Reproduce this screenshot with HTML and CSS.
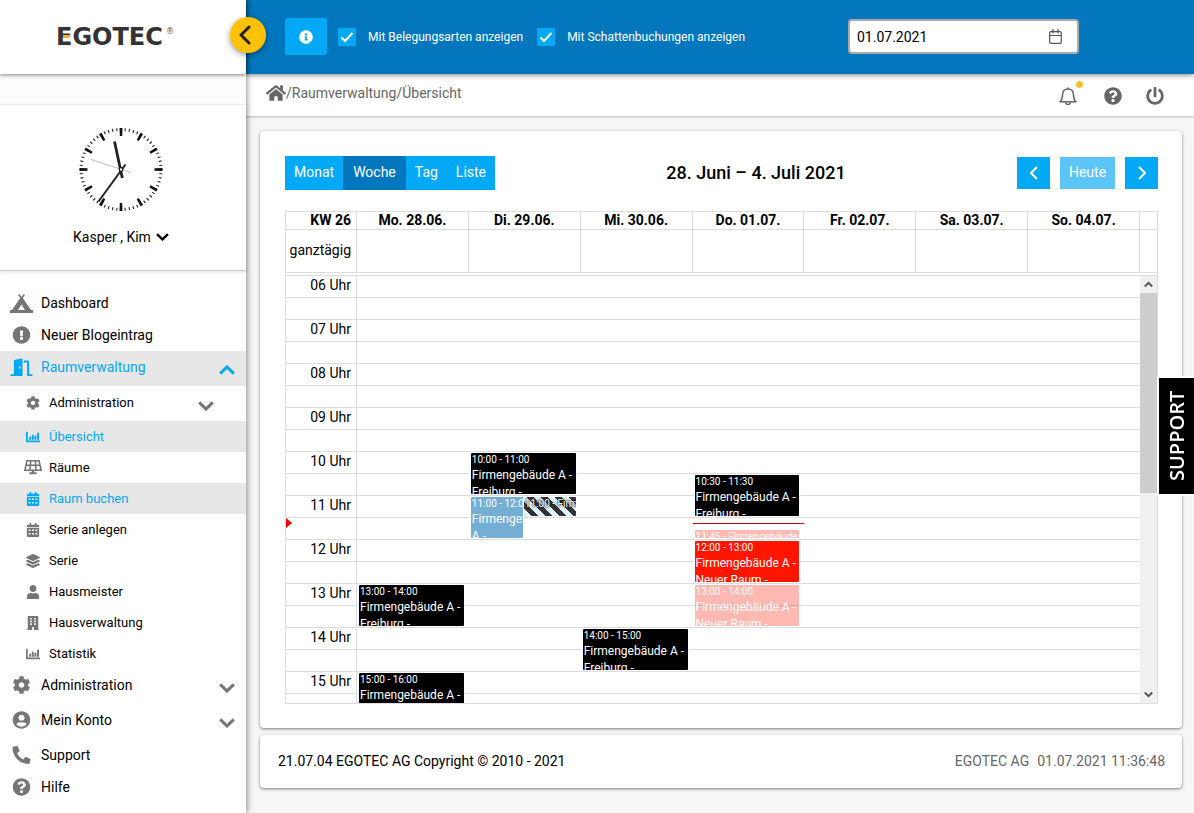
FILE: index.html
```html
<!DOCTYPE html>
<html lang="de">
<head>
<meta charset="utf-8">
<meta name="viewport" content="width=device-width, initial-scale=1">
<title>Raumverwaltung – Übersicht</title>
<link rel="stylesheet" href="styles.css">
</head>
<body>
<svg class="sprite" aria-hidden="true">
  <symbol id="i-home" viewBox="0 0 576 512"><path d="M280.37 148.26L96 300.11V464a16 16 0 0 0 16 16l112.06-.29a16 16 0 0 0 15.92-16V368a16 16 0 0 1 16-16h64a16 16 0 0 1 16 16v95.64a16 16 0 0 0 16 16.05L464 480a16 16 0 0 0 16-16V300L295.67 148.26a12.19 12.19 0 0 0-15.3 0zM571.6 251.47L488 182.56V44.05a12 12 0 0 0-12-12h-56a12 12 0 0 0-12 12v72.61L318.47 43a48 48 0 0 0-61 0L4.34 251.47a12 12 0 0 0-1.6 16.9l25.5 31A12 12 0 0 0 45.15 301l235.22-193.74a12.19 12.19 0 0 1 15.3 0L530.9 301a12 12 0 0 0 16.9-1.6l25.5-31a12 12 0 0 0-1.7-16.93z"/></symbol>
  <symbol id="i-cog" viewBox="0 0 512 512"><path d="M487.4 315.7l-42.6-24.6c4.3-23.2 4.3-47 0-70.2l42.6-24.6c4.9-2.8 7.1-8.6 5.5-14-11.1-35.6-30-67.8-54.7-94.6-3.8-4.1-10-5.1-14.8-2.3L380.8 110c-17.9-15.4-38.5-27.3-60.8-35.1V25.8c0-5.6-3.9-10.5-9.4-11.7-36.7-8.2-74.3-7.8-109.2 0-5.5 1.2-9.4 6.1-9.4 11.7V75c-22.2 7.9-42.8 19.8-60.8 35.1L88.7 85.5c-4.9-2.8-11-1.9-14.8 2.3-24.7 26.7-43.6 58.9-54.7 94.6-1.7 5.4.6 11.2 5.5 14L67.3 221c-4.3 23.2-4.3 47 0 70.2l-42.6 24.6c-4.9 2.8-7.1 8.6-5.5 14 11.1 35.6 30 67.8 54.7 94.6 3.8 4.1 10 5.1 14.8 2.3l42.6-24.6c17.9 15.4 38.5 27.3 60.8 35.1v49.2c0 5.6 3.9 10.5 9.4 11.7 36.7 8.2 74.3 7.8 109.2 0 5.5-1.2 9.4-6.1 9.4-11.7v-49.2c22.2-7.9 42.8-19.8 60.8-35.1l42.6 24.6c4.9 2.8 11 1.9 14.8-2.3 24.7-26.7 43.6-58.9 54.7-94.6 1.5-5.5-.7-11.3-5.6-14.1zM256 336c-44.1 0-80-35.9-80-80s35.9-80 80-80 80 35.9 80 80-35.9 80-80 80z"/></symbol>
  <symbol id="i-question" viewBox="0 0 512 512"><path d="M504 256c0 136.997-111.043 248-248 248S8 392.997 8 256C8 119.083 119.043 8 256 8s248 111.083 248 248zM262.655 90c-54.497 0-89.255 22.957-116.549 63.758-3.536 5.286-2.353 12.415 2.715 16.258l34.699 26.31c5.205 3.947 12.621 3.008 16.665-2.122 17.864-22.658 30.113-35.797 57.303-35.797 20.429 0 45.698 13.148 45.698 32.958 0 14.976-12.363 22.667-32.534 33.976C247.128 238.528 216 254.941 216 296v4c0 6.627 5.373 12 12 12h56c6.627 0 12-5.373 12-12v-1.333c0-28.462 83.186-29.647 83.186-106.667 0-58.002-60.165-102-116.531-102zM256 338c-25.365 0-46 20.635-46 46 0 25.364 20.635 46 46 46s46-20.636 46-46c0-25.365-20.635-46-46-46z"/></symbol>
  <symbol id="i-info" viewBox="0 0 512 512"><path d="M256 8C119.043 8 8 119.083 8 256c0 136.997 111.043 248 248 248s248-111.003 248-248C504 119.083 392.957 8 256 8zm0 110c23.196 0 42 18.804 42 42s-18.804 42-42 42-42-18.804-42-42 18.804-42 42-42zm56 254c0 6.627-5.373 12-12 12h-88c-6.627 0-12-5.373-12-12v-24c0-6.627 5.373-12 12-12h12v-64h-12c-6.627 0-12-5.373-12-12v-24c0-6.627 5.373-12 12-12h64c6.627 0 12 5.373 12 12v100h12c6.627 0 12 5.373 12 12v24z"/></symbol>
  <symbol id="i-exclaim" viewBox="0 0 512 512"><path d="M504 256c0 136.997-111.043 248-248 248S8 392.997 8 256C8 119.083 119.043 8 256 8s248 111.083 248 248zm-248 50c-25.405 0-46 20.595-46 46s20.595 46 46 46 46-20.595 46-46-20.595-46-46-46zm-43.673-165.346l7.418 136c.347 6.364 5.609 11.346 11.982 11.346h48.546c6.373 0 11.635-4.982 11.982-11.346l7.418-136c.375-6.874-5.098-12.654-11.982-12.654h-63.383c-6.884 0-12.356 5.78-11.981 12.654z"/></symbol>
  <symbol id="i-power" viewBox="0 0 512 512"><path d="M400 54.1c63 45 104 118.6 104 201.9 0 136.8-110.8 247.7-247.5 248C120 504.3 8.2 393 8 256.4 7.9 173.1 48.9 99.3 111.8 54.2c11.7-8.3 28-4.8 35 7.7L162.6 90c5.9 10.5 3.1 23.8-6.6 31-41.5 30.8-68 79.6-68 134.9-.1 92.3 74.5 168.1 168 168.1 91.6 0 168.6-74.2 168-169.1-.3-51.8-24.7-101.8-68.1-134-9.7-7.2-12.4-20.5-6.5-30.9l15.8-28.1c7-12.4 23.2-16.1 34.8-7.8zM296 264V24c0-13.3-10.7-24-24-24h-32c-13.3 0-24 10.7-24 24v240c0 13.3 10.7 24 24 24h32c13.3 0 24-10.7 24-24z"/></symbol>
  <symbol id="i-user" viewBox="0 0 448 512"><path d="M224 256c70.7 0 128-57.3 128-128S294.7 0 224 0 96 57.3 96 128s57.3 128 128 128zm89.6 32h-16.7c-22.2 10.2-46.9 16-72.9 16s-50.6-5.8-72.9-16h-16.7C60.2 288 0 348.2 0 422.4V464c0 26.5 21.5 48 48 48h352c26.5 0 48-21.5 48-48v-41.6c0-74.2-60.2-134.4-134.4-134.4z"/></symbol>
  <symbol id="i-account" viewBox="0 0 496 512"><path d="M248 8C111 8 0 119 0 256s111 248 248 248 248-111 248-248S385 8 248 8zm0 96c48.6 0 88 39.4 88 88s-39.4 88-88 88-88-39.4-88-88 39.4-88 88-88zm0 344c-58.7 0-111.3-26.6-146.5-68.2 18.8-35.4 55.6-59.8 98.5-59.8 2.4 0 4.8.4 7.1 1.1 13 4.2 26.6 6.9 40.9 6.9 14.3 0 28-2.7 40.9-6.9 2.3-.7 4.7-1.1 7.1-1.1 42.9 0 79.7 24.4 98.5 59.8C359.3 421.4 306.7 448 248 448z"/></symbol>
  <symbol id="i-phone" viewBox="0 0 512 512"><path transform="matrix(-1 0 0 1 512 0)" d="M493.4 24.6l-104-24c-11.3-2.6-22.9 3.3-27.5 13.9l-48 112c-4.2 9.8-1.4 21.3 6.9 28l60.6 49.6c-36 76.7-98.9 140.5-177.2 177.2l-49.6-60.6c-6.8-8.3-18.2-11.1-28-6.9l-112 48C3.9 366.5-2 378.1.6 389.4l24 104C27.1 504.2 36.7 512 48 512c256.1 0 464-207.5 464-464 0-11.2-7.7-20.9-18.6-23.4z"/></symbol>
  <symbol id="i-layers" viewBox="0 0 512 512"><path d="M12.41 148.02l232.94 105.67c6.8 3.09 14.49 3.09 21.29 0l232.94-105.67c16.55-7.51 16.55-32.52 0-40.03L266.65 2.31a25.607 25.607 0 0 0-21.29 0L12.41 107.98c-16.55 7.51-16.55 32.53 0 40.04zm487.18 88.28l-58.09-26.33-161.64 73.27c-7.56 3.43-15.59 5.17-23.86 5.17s-16.29-1.74-23.86-5.17L70.51 209.97l-58.1 26.33c-16.55 7.5-16.55 32.5 0 40l232.94 105.59c6.8 3.08 14.49 3.08 21.29 0L499.59 276.3c16.55-7.5 16.55-32.5 0-40zm0 127.8l-57.87-26.23-161.86 73.37c-7.56 3.43-15.59 5.17-23.86 5.17s-16.29-1.74-23.86-5.17L70.29 337.87 12.41 364.1c-16.55 7.5-16.55 32.5 0 40l232.94 105.59c6.8 3.08 14.49 3.08 21.29 0L499.59 404.1c16.55-7.5 16.55-32.5 0-40z"/></symbol>
  <symbol id="i-calendar" viewBox="0 0 448 512"><path fill-rule="evenodd" d="M0 144V112a48 48 0 0 1 48-48h48V12a12 12 0 0 1 12-12h40a12 12 0 0 1 12 12v52h128V12a12 12 0 0 1 12-12h40a12 12 0 0 1 12 12v52h48a48 48 0 0 1 48 48v32zM0 176h448v288a48 48 0 0 1-48 48H48a48 48 0 0 1-48-48zM64 236v60h72v-60zM188 236v60h72v-60zM312 236v60h72v-60zM64 364v60h72v-60zM188 364v60h72v-60zM312 364v60h72v-60z"/></symbol>
  <symbol id="i-chart" viewBox="0 0 512 512"><path d="M0 76a12 12 0 0 1 12-12h40a12 12 0 0 1 12 12v308h436a12 12 0 0 1 12 12v40a12 12 0 0 1-12 12H32a32 32 0 0 1-32-32zM116 244h72v108h-72zM212 172h72v180h-72zM308 212h72v140h-72zM404 100h72v252h-72z"/></symbol>
  <symbol id="i-building" viewBox="0 0 448 512"><path fill-rule="evenodd" d="M8 480h24V24A24 24 0 0 1 56 0h336a24 24 0 0 1 24 24v456h24v32H256V400h-64v112H8zM120 70v60h60v-60zM268 70v60h60v-60zM120 168v60h60v-60zM268 168v60h60v-60zM120 266v60h60v-60zM268 266v60h60v-60z"/></symbol>
  <symbol id="i-panel" viewBox="0 0 18 15"><path fill="none" stroke="currentColor" stroke-width="1.600" d="M3 .8h12l2.100 9.400H.9zM2 5.300h14M6.700.8l-.8 9.400M11.300.8l.8 9.400"/><path d="M7.800 10h2.400v2.300h2.300v2H5.500v-2h2.300z"/></symbol>
  <symbol id="i-door" viewBox="0 0 23 20"><path fill-rule="evenodd" d="M0 17h3.500V3.500Q3.500 2.200 4.800 1.900L11 .5q1.600-.3 1.600 1.200V19H0zM9.600 8.600q-1 0-1 1.400t1 1.400 1-1.400-1-1.400z"/><path d="M14 2.500h4q1.600 0 1.600 1.600V17H23v2h-5.600V4.700H14z"/></symbol>
  <symbol id="i-camp" viewBox="0 0 23 19"><path fill-rule="evenodd" d="M8 .9 9.300 0l2.200 3 2.200-3L15 .9l-2.200 3.100L21 16h2v3H0v-3h2l8.200-12zM11.500 10.500 8 16h7z"/></symbol>
  <symbol id="i-bell" viewBox="0 0 18 19"><path fill="none" stroke="currentColor" stroke-width="1.500" stroke-linejoin="round" d="M1 14.700Q3.500 12.500 3.500 8 3.500 2 9 2t5.500 6q0 4.500 2.500 6.700z"/><path fill="none" stroke="currentColor" stroke-width="1.500" d="M9 2V.5M6.500 15.300Q7 17.500 9 17.500t2.500-2.200"/></symbol>
  <symbol id="i-down" viewBox="0 0 16 10"><path fill="none" stroke="currentColor" stroke-width="3" d="M1.200 1.400 8 8l6.800-6.600"/></symbol>
  <symbol id="i-up" viewBox="0 0 16 10"><path fill="none" stroke="currentColor" stroke-width="3" d="M1.200 8.600 8 2l6.800 6.600"/></symbol>
  <symbol id="i-left" viewBox="0 0 10 16"><path fill="none" stroke="currentColor" stroke-width="2" d="M8 2 2 8l6 6"/></symbol>
  <symbol id="i-right" viewBox="0 0 10 16"><path fill="none" stroke="currentColor" stroke-width="2" d="M2 2l6 6-6 6"/></symbol>
</svg>

<div class="app">
  <aside class="sidebar">
    <div class="brand">
      <svg class="logo" viewBox="0 0 132 28" role="img" aria-label="EGOTEC">
        <text class="logo-text" x="6" y="22">EGOTEC</text>
        <rect x="13" y="12" width="7" height="3" fill="#f0b040"/>
        <text class="logo-mark" x="116" y="11">®</text>
      </svg>
      <button class="collapse" type="button" aria-label="Menü einklappen">
        <svg width="12" height="20" viewBox="0 0 12 20"><path fill="none" stroke="#222" stroke-width="3" stroke-linecap="round" d="M10 2 2 10l8 8"/></svg>
      </button>
    </div>
    <div class="strip"></div>
    <div class="profile">
      <svg class="clock" viewBox="-42 -42 84 84" role="img" aria-label="11:36">
        <circle r="40" pathLength="600" fill="none" stroke="#222" stroke-width="3" stroke-dasharray="2.600 7.400" stroke-dashoffset="1.300"/>
        <circle r="37.500" pathLength="120" fill="none" stroke="#111" stroke-width="8" stroke-dasharray="1.400 8.600" stroke-dashoffset=".7"/>
        <path stroke="#222" stroke-width="2.800" d="M-6.500-28 1.300 8.500"/>
        <path stroke="#222" stroke-width="2" d="M4.500-5-22.500 32"/>
        <path stroke="#aaa" stroke-width=".8" d="M-30-10 10 3"/>
        <circle r="1.800" fill="#fff" stroke="#111" stroke-width="1.200"/>
      </svg>
      <button class="user" type="button">Kasper , Kim <svg class="user-arrow"><use href="#i-down"/></svg></button>
    </div>
    <nav class="nav">
      <a class="item" href="#"><svg class="icon wide"><use href="#i-camp"/></svg><span>Dashboard</span></a>
      <a class="item" href="#"><svg class="icon"><use href="#i-exclaim"/></svg><span>Neuer Blogeintrag</span></a>
      <a class="item parent active" href="#"><svg class="icon wide"><use href="#i-door"/></svg><span>Raumverwaltung</span><svg class="arrow"><use href="#i-up"/></svg></a>
      <a class="item sub parent" href="#"><svg class="icon"><use href="#i-cog"/></svg><span>Administration</span><svg class="arrow"><use href="#i-down"/></svg></a>
      <a class="item sub active" href="#"><svg class="icon"><use href="#i-chart"/></svg><span>Übersicht</span></a>
      <a class="item sub" href="#"><svg class="icon wide"><use href="#i-panel"/></svg><span>Räume</span></a>
      <a class="item sub active" href="#"><svg class="icon"><use href="#i-calendar"/></svg><span>Raum buchen</span></a>
      <a class="item sub" href="#"><svg class="icon"><use href="#i-calendar"/></svg><span>Serie anlegen</span></a>
      <a class="item sub" href="#"><svg class="icon"><use href="#i-layers"/></svg><span>Serie</span></a>
      <a class="item sub" href="#"><svg class="icon"><use href="#i-user"/></svg><span>Hausmeister</span></a>
      <a class="item sub" href="#"><svg class="icon"><use href="#i-building"/></svg><span>Hausverwaltung</span></a>
      <a class="item sub" href="#"><svg class="icon"><use href="#i-chart"/></svg><span>Statistik</span></a>
      <a class="item parent" href="#"><svg class="icon"><use href="#i-cog"/></svg><span>Administration</span><svg class="arrow"><use href="#i-down"/></svg></a>
      <a class="item parent" href="#"><svg class="icon"><use href="#i-account"/></svg><span>Mein Konto</span><svg class="arrow"><use href="#i-down"/></svg></a>
      <a class="item" href="#"><svg class="icon"><use href="#i-phone"/></svg><span>Support</span></a>
      <a class="item" href="#"><svg class="icon"><use href="#i-question"/></svg><span>Hilfe</span></a>
    </nav>
  </aside>

  <div class="main">
    <header class="topbar">
      <button class="info" type="button" aria-label="Information"><svg width="14" height="14"><use href="#i-info"/></svg></button>
      <label class="check"><input type="checkbox" checked><span>Mit Belegungsarten anzeigen</span></label>
      <label class="check"><input type="checkbox" checked><span>Mit Schattenbuchungen anzeigen</span></label>
      <div class="date">
        <input type="text" value="01.07.2021" aria-label="Datum">
        <svg width="13" height="15" viewBox="0 0 13 15"><path fill="none" stroke="#555" stroke-width="1.200" d="M2 2.600h9q1.300 0 1.300 1.300V13q0 1.300-1.300 1.300H2Q.7 14.300.7 13V3.900Q.7 2.600 2 2.600zM.7 6.500h11.600M4 0v4.500M9 0v4.500"/></svg>
      </div>
    </header>
    <div class="crumbs">
      <div class="path"><a href="#" aria-label="Start"><svg width="20" height="18"><use href="#i-home"/></svg></a>/<a href="#">Raumverwaltung</a>/<a href="#">Übersicht</a></div>
      <div class="tools">
        <button class="tool bell" type="button" aria-label="Benachrichtigungen"><svg width="18" height="19"><use href="#i-bell"/></svg><span class="dot"></span></button>
        <button class="tool" type="button" aria-label="Hilfe"><svg width="18" height="18"><use href="#i-question"/></svg></button>
        <button class="tool" type="button" aria-label="Abmelden"><svg width="18" height="18"><use href="#i-power"/></svg></button>
      </div>
    </div>

    <main class="content">
      <section class="card planner">
        <div class="bar">
          <div class="views">
            <button type="button">Monat</button><button class="on" type="button">Woche</button><button type="button">Tag</button><button type="button">Liste</button>
          </div>
          <h1>28. Juni – 4. Juli 2021</h1>
          <div class="pager">
            <button type="button" aria-label="Zurück"><svg width="10" height="16"><use href="#i-left"/></svg></button>
            <button class="today" type="button" disabled>Heute</button>
            <button type="button" aria-label="Weiter"><svg width="10" height="16"><use href="#i-right"/></svg></button>
          </div>
        </div>

        <div class="calendar">
          <table class="head">
            <colgroup><col class="c-axis"><col span="7"><col class="c-scroll"></colgroup>
            <thead><tr><th>KW 26</th><th>Mo. 28.06.</th><th>Di. 29.06.</th><th>Mi. 30.06.</th><th>Do. 01.07.</th><th>Fr. 02.07.</th><th>Sa. 03.07.</th><th>So. 04.07.</th><td></td></tr></thead>
            <tbody><tr class="allday"><th>ganztägig</th><td></td><td></td><td></td><td></td><td></td><td></td><td></td><td></td></tr></tbody>
          </table>
          <div class="divider"></div>
          <div class="scroller">
            <div class="viewport">
              <table class="slots">
                <colgroup><col class="c-axis"><col></colgroup>
                <tbody>
                  <tr><th>06 Uhr</th><td></td></tr><tr><th></th><td></td></tr>
                  <tr><th>07 Uhr</th><td></td></tr><tr><th></th><td></td></tr>
                  <tr><th>08 Uhr</th><td></td></tr><tr><th></th><td></td></tr>
                  <tr><th>09 Uhr</th><td></td></tr><tr><th></th><td></td></tr>
                  <tr><th>10 Uhr</th><td></td></tr><tr><th></th><td></td></tr>
                  <tr><th>11 Uhr</th><td></td></tr><tr><th></th><td></td></tr>
                  <tr><th>12 Uhr</th><td></td></tr><tr><th></th><td></td></tr>
                  <tr><th>13 Uhr</th><td></td></tr><tr><th></th><td></td></tr>
                  <tr><th>14 Uhr</th><td></td></tr><tr><th></th><td></td></tr>
                  <tr><th>15 Uhr</th><td></td></tr><tr><th></th><td></td></tr>
                </tbody>
              </table>
              <div class="days">
                <div class="axis"><span class="now-arrow" style="top:242px"></span></div>
                <div class="day">
                  <a class="event" href="#" style="top:309px;height:41px"><time>13:00 - 14:00</time><span>Firmengebäude A - Freiburg -</span></a>
                  <a class="event" href="#" style="top:397px;height:41px"><time>15:00 - 16:00</time><span>Firmengebäude A - Freiburg -</span></a>
                </div>
                <div class="day">
                  <a class="event" href="#" style="top:177px;height:41px"><time>10:00 - 11:00</time><span>Firmengebäude A - Freiburg -</span></a>
                  <a class="event blue half-left" href="#" style="top:221px;height:41px"><time>11:00 - 12:00</time><span>Firmengebäude A -</span></a>
                  <a class="event striped half-right" href="#" style="top:221px;height:19px"><time>11:00 - Firmengebäude A</time></a>
                </div>
                <div class="day">
                  <a class="event" href="#" style="top:353px;height:41px"><time>14:00 - 15:00</time><span>Firmengebäude A - Freiburg -</span></a>
                </div>
                <div class="day">
                  <a class="event" href="#" style="top:199px;height:41px"><time>10:30 - 11:30</time><span>Firmengebäude A - Freiburg -</span></a>
                  <span class="now-line" style="top:247px"></span>
                  <a class="event pink" href="#" style="top:254px;height:8px"><time>11:45 - Firmengebäude A</time></a>
                  <a class="event red" href="#" style="top:265px;height:41px"><time>12:00 - 13:00</time><span>Firmengebäude A - Neuer Raum -</span></a>
                  <a class="event pink" href="#" style="top:309px;height:41px"><time>13:00 - 14:00</time><span>Firmengebäude A - Neuer Raum -</span></a>
                </div>
                <div class="day"></div>
                <div class="day"></div>
                <div class="day"></div>
              </div>
            </div>
            <div class="scrollbar" aria-hidden="true">
              <svg width="9" height="17" viewBox="0 0 9 17"><path fill="none" stroke="#555" stroke-width="2" d="M.8 10.500 4.500 6.800l3.700 3.700"/></svg>
              <span class="thumb"></span>
              <svg width="9" height="17" viewBox="0 0 9 17"><path fill="none" stroke="#555" stroke-width="2" d="M.8 6.500l3.700 3.700 3.700-3.700"/></svg>
            </div>
          </div>
        </div>
      </section>

      <footer class="card foot">
        <span>21.07.04 EGOTEC AG Copyright © 2010 - 2021</span>
        <span class="stamp"><span>EGOTEC AG</span><time>01.07.2021 11:36:48</time></span>
      </footer>
    </main>
  </div>
  <button class="support" type="button">SUPPORT</button>
</div>
</body>
</html>
```
FILE: styles.css
```css
* { box-sizing: border-box; }

body {
  margin: 0;
  background: #f6f6f6;
  color: #000;
  font: 14px/20px Roboto, "Liberation Sans", sans-serif;
}

button {
  margin: 0;
  padding: 0;
  border: 0;
  background: none;
  color: inherit;
  font: inherit;
  cursor: pointer;
}

a { color: inherit; text-decoration: none; }
svg { display: block; fill: currentColor; }

.sprite { position: absolute; width: 0; height: 0; }

.app { display: flex; min-height: 100vh; }

/* Sidebar */
.sidebar {
  position: relative;
  z-index: 2;
  flex: 0 0 246px;
  background: #fff;
  box-shadow: 1px 0 6px rgba(0, 0, 0, .45);
}

.brand {
  position: relative;
  z-index: 1;
  display: flex;
  align-items: center;
  justify-content: center;
  height: 74px;
  padding-right: 14px;
  background: #fff;
  box-shadow: 0 1px 4px rgba(0, 0, 0, .5);
}

.logo { width: 132px; height: 28px; overflow: visible; }
.logo-text { fill: #333; font: bold 24px "DejaVu Sans", sans-serif; }
.logo-mark { fill: #555; font: 8px "DejaVu Sans", sans-serif; }

.collapse {
  position: absolute;
  top: 17px;
  right: -20px;
  display: flex;
  align-items: center;
  justify-content: center;
  width: 36px;
  height: 36px;
  padding-right: 6px;
  border-radius: 50%;
  background: #ffc107;
  box-shadow: 0 2px 6px rgba(0, 0, 0, .4);
}

.strip { height: 31px; background: #fdfdfd; border-bottom: 1px solid #f4f4f4; }

.profile {
  display: flex;
  flex-direction: column;
  align-items: center;
  gap: 15px;
  padding: 22px 4px 23px 0;
  border-bottom: 1px solid #ccc;
  box-shadow: 0 1px 4px rgba(0, 0, 0, .12);
}

.clock { width: 84px; height: 85px; }
.user { display: flex; align-items: center; gap: 5px; }
.user-arrow { width: 13px; height: 8px; }

.nav { display: flex; flex-direction: column; padding: 16px 0 10px; }

.item {
  display: flex;
  align-items: center;
  gap: 10px;
  height: 32px;
  padding: 0 10px 0 12px;
}

.item .icon { flex: none; width: 19px; height: 18px; color: #757575; }
.item .icon.wide { width: 23px; height: 19px; margin: 0 -2px; }
.item .arrow { width: 16px; height: 10px; margin: 6px 1px 0 auto; color: #757575; }
.item.parent { height: 35px; padding-bottom: 3px; }

.item.sub { gap: 9px; height: 31px; padding: 0 31px 0 26px; font-size: 13px; }
.item.sub .icon { width: 14px; height: 14px; }
.item.sub .icon.wide { width: 18px; height: 15px; }
.item.sub.parent { height: 35px; padding-bottom: 2px; }

.item.active { background: #e7e7e7; }
.item.active, .item.active .icon, .item.active .arrow { color: #03a9f4; }

/* Header */
.main { flex: 1; min-width: 0; }

.topbar {
  position: relative;
  z-index: 1;
  display: flex;
  align-items: center;
  height: 74px;
  padding: 0 115px 1px 39px;
  background: #0277bd;
  color: #fff;
  box-shadow: 0 1px 5px rgba(0, 0, 0, .5);
}

.info {
  display: flex;
  align-items: center;
  justify-content: center;
  width: 42px;
  height: 37px;
  margin-right: 11px;
  border-radius: 3px;
  background: #03a9f4;
}

.check {
  display: flex;
  align-items: center;
  gap: 12px;
  margin-right: 14px;
  font-size: 12px;
}

.check input {
  width: 18px;
  height: 18px;
  margin: 0;
  border-radius: 1px;
  appearance: none;
  background: #03a9f4 url("data:image/svg+xml,%3Csvg xmlns='http://www.w3.org/2000/svg' viewBox='0 0 18 18'%3E%3Cpath fill='none' stroke='white' stroke-width='2' d='M3.500 9.500l3.500 3.500 7.500-8'/%3E%3C/svg%3E");
}

.date { position: relative; width: 231px; margin-left: auto; }

.date input {
  width: 100%;
  height: 35px;
  padding: 0 40px 0 7px;
  border: 2px solid #aaa;
  border-radius: 4px;
  background: #fff;
  color: #000;
  font: inherit;
}

.date svg { position: absolute; top: 10px; right: 17px; }

.crumbs {
  display: flex;
  align-items: center;
  justify-content: space-between;
  height: 42px;
  padding: 0 30px 4px 20px;
  background: #fff;
  color: #666;
  box-shadow: 0 1px 2px rgba(0, 0, 0, .25);
}

.path { display: flex; align-items: center; }
.tools { display: flex; align-items: center; gap: 24px; padding-top: 6px; }
.bell { position: relative; margin-right: 3px; }

.dot {
  position: absolute;
  top: -6px;
  right: -6px;
  width: 7px;
  height: 7px;
  border-radius: 50%;
  background: #fbc02d;
}

/* Content */
.content { display: flex; flex-direction: column; gap: 7px; padding: 15px 12px 24px 14px; }

.card {
  border-radius: 4px;
  background: #fff;
  box-shadow: 0 1px 3px rgba(0, 0, 0, .5);
}

.planner { padding: 25px 24px 24px 25px; }

.bar { display: flex; align-items: center; justify-content: space-between; margin-bottom: 21px; }
.bar h1 { margin: 0; font-size: 18px; font-weight: 500; }

.views { display: flex; background: #03a9f4; color: #fff; }
.views button { height: 34px; padding: 0 9px 2px; }
.views .on { padding: 0 10px 2px; background: #0277bd; }

.pager { display: flex; gap: 10px; color: #fff; }
.pager button {
  display: flex;
  align-items: center;
  justify-content: center;
  width: 33px;
  height: 32px;
  background: #03a9f4;
}
.pager .today { width: 55px; padding-bottom: 2px; background: #5bc5f8; color: #fff; }

/* Calendar */
.calendar { border: 1px solid #ddd; }

table { width: 100%; table-layout: fixed; border-spacing: 0; }
th, td { padding: 0; border: 0 solid #ddd; }
.c-axis { width: 71px; }
.c-scroll { width: 17px; }

.head th, .head td { height: 18px; border-width: 0 1px 1px 0; line-height: 17px; }
.head tr > :last-child { border-right: 0; }
.head th:first-child { padding-right: 5px; text-align: right; }
.head .allday > * { height: 43px; padding-bottom: 2px; font-weight: 400; }

.divider { height: 3px; border-bottom: 1px solid #ddd; }

.scroller { display: flex; height: 427px; }
.viewport { position: relative; flex: 1; min-width: 0; overflow: hidden; }

.slots th, .slots td { height: 22px; padding-bottom: 2px; border-bottom-width: 1px; line-height: 19px; }
.slots th { padding-right: 5px; border-right-width: 1px; font-weight: 400; text-align: right; }

.days {
  position: absolute;
  inset: 0;
  display: grid;
  grid-template-columns: 71px repeat(7, 1fr);
}

.axis, .day { position: relative; }

.event {
  position: absolute;
  left: 2px;
  right: 5px;
  overflow: hidden;
  padding: 0 1px;
  border-radius: 1px;
  background: #000;
  box-shadow: 0 0 0 1px #fff;
  color: #fff;
  font-size: 12px;
  line-height: 17px;
}

.event time { display: block; font-size: 10px; line-height: 14px; white-space: nowrap; }
.event span { display: block; }
.event.blue { background: #74aed5; }
.event.red { background: #ff1500; }
.event.pink { background: rgba(255, 21, 0, .3); }
.event.half-left { right: 58px; }
.event.half-right { left: 55px; }
.event.striped {
  background: repeating-linear-gradient(45deg, #e1f3ff 0 5px, #333 5px 10px);
  text-shadow: 0 0 2px #000, 0 0 2px #000;
}

.now-line { position: absolute; left: 0; right: 0; height: 1px; background: #d00000; }

.now-arrow {
  position: absolute;
  left: 0;
  border: 5px solid transparent;
  border-left: 6px solid #f00;
  border-right: 0;
}

.scrollbar {
  display: flex;
  flex: 0 0 17px;
  flex-direction: column;
  align-items: center;
  background: #f0f0f0;
}

.thumb { width: 17px; height: 200px; margin-bottom: auto; background: #cdcdcd; }

/* Footer */
.foot {
  display: flex;
  align-items: center;
  justify-content: space-between;
  min-height: 53px;
  padding: 0 17px 2px 18px;
}

.stamp { display: flex; gap: 8px; color: #666; }

/* Support tab */
.support {
  position: fixed;
  z-index: 3;
  top: 376px;
  right: 0;
  width: 37px;
  height: 120px;
  border: 2px solid #fff;
  border-left: 0;
  background: #000;
  color: #fff;
  font: 600 20px/35px "Open Sans", sans-serif;
  text-align: center;
  writing-mode: vertical-rl;
  transform: rotate(180deg);
}
```
